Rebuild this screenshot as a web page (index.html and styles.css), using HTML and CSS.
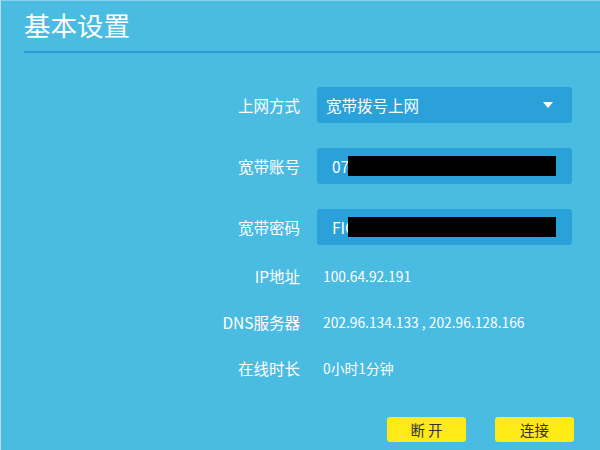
FILE: index.html
```html
<!DOCTYPE html>
<html lang="zh-CN">
<head>
<meta charset="utf-8">
<title>基本设置</title>
<link rel="stylesheet" href="styles.css">
</head>
<body>
<div class="page">
  <h1 class="title">基本设置</h1>
  <div class="form">
    <div class="row field-row">
      <div class="label">上网方式</div>
      <div class="box select">
        <span>宽带拨号上网</span>
        <svg class="caret" width="10" height="6" viewBox="0 0 10 6"><path d="M0 0H10L5 6Z" fill="#fff"/></svg>
      </div>
    </div>
    <div class="row field-row gap">
      <div class="label">宽带账号</div>
      <div class="box input"><span class="val">07</span><span class="redact"></span></div>
    </div>
    <div class="row field-row gap">
      <div class="label">宽带密码</div>
      <div class="box input"><span class="val">FIC</span><span class="redact"></span></div>
    </div>
    <div class="row info-row first">
      <div class="label">IP地址</div>
      <div class="info">100.64.92.191</div>
    </div>
    <div class="row info-row">
      <div class="label">DNS服务器</div>
      <div class="info">202.96.134.133 , 202.96.128.166</div>
    </div>
    <div class="row info-row">
      <div class="label">在线时长</div>
      <div class="info">0小时1分钟</div>
    </div>
  </div>
  <div class="buttons">
    <button class="btn">断 开</button>
    <button class="btn">连接</button>
  </div>
</div>
</body>
</html>
```
FILE: styles.css
```css
html, body {
  margin: 0;
  padding: 0;
  height: 100%;
}
body {
  background: #4abce1;
  font-family: "Microsoft YaHei", "Noto Sans CJK SC", sans-serif;
  color: #fff;
  overflow: hidden;
}
.page {
  height: 100%;
  box-sizing: border-box;
  border-left: 1px solid #bcdce8;
  border-top: 1px solid #8fd0ea;
}
.title {
  margin: 0 0 0 23px;
  height: 52px;
  box-sizing: border-box;
  padding-top: 6px;
  font-size: 26.5px;
  line-height: 36px;
  font-weight: normal;
  border-bottom: 2px solid #2a9cd4;
}
.form {
  margin-top: 34px;
}
.row {
  display: grid;
  grid-template-columns: 299px 255px;
  column-gap: 17px;
  align-items: center;
}
.label {
  text-align: right;
  font-size: 15.5px;
}
.field-row {
  height: 36px;
}
.field-row.gap {
  margin-top: 25px;
}
.box {
  height: 36px;
  background: #2aa1d9;
  border-radius: 3px;
  display: flex;
  align-items: center;
  position: relative;
  font-size: 15.5px;
}
.select {
  padding: 0 19px 0 9px;
  justify-content: space-between;
}
.input {
  padding-left: 15px;
  overflow: hidden;
}
.redact {
  position: absolute;
  left: 31px;
  top: 8px;
  width: 208px;
  height: 20px;
  background: #000;
}
.info-row {
  height: 46px;
}
.info-row.first {
  margin-top: 8px;
}
.info {
  font-size: 13.8px;
  padding-left: 6px;
}
.buttons {
  display: flex;
  justify-content: flex-end;
  gap: 29px;
  padding-right: 26px;
  margin-top: 26px;
}
.btn {
  width: 79px;
  height: 25px;
  border: none;
  border-radius: 3px;
  background: #ffea17;
  color: #333;
  font-family: "Microsoft YaHei", "Noto Sans CJK SC", sans-serif;
  font-size: 14.5px;
  padding: 0;
}
```
